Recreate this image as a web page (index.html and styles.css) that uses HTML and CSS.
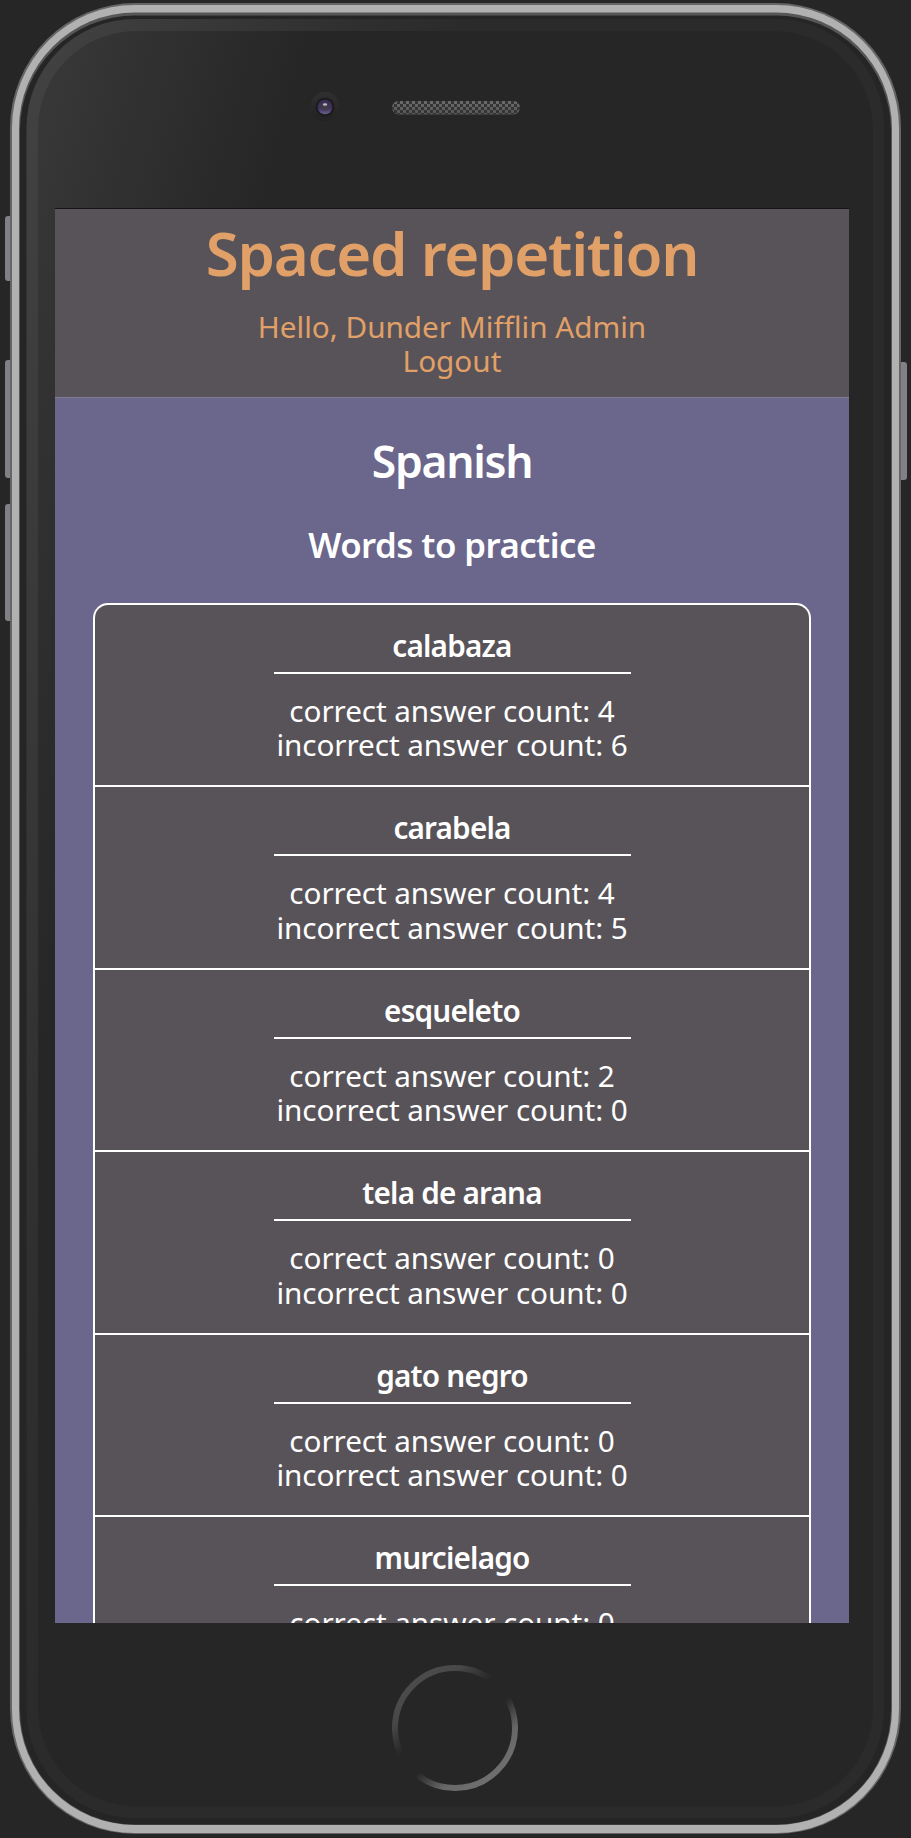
FILE: index.html
```html
<!DOCTYPE html>
<html lang="en">
<head>
<meta charset="utf-8">
<title>Spaced repetition</title>
<link rel="stylesheet" href="styles.css">
</head>
<body>
<div class="device">
  <svg class="hardware" viewBox="0 0 911 1838" aria-hidden="true">
    <defs>
      <linearGradient id="glare" gradientUnits="userSpaceOnUse" x1="30" y1="60" x2="284" y2="126">
        <stop offset="0" stop-color="#393939"/><stop offset="1" stop-color="#262626"/>
      </linearGradient>
      <linearGradient id="rim" gradientUnits="userSpaceOnUse" x1="30" y1="60" x2="430" y2="164">
        <stop offset="0" stop-color="#424242"/><stop offset="0.75" stop-color="#2f2f2f"/><stop offset="1" stop-color="#2b2b2b"/>
      </linearGradient>
      <linearGradient id="ring" x1="0.18" y1="0.12" x2="0.82" y2="0.88">
        <stop offset="0" stop-color="#4b4b4b"/><stop offset="0.14" stop-color="#484848"/><stop offset="0.38" stop-color="#262626"/>
        <stop offset="0.59" stop-color="#262626"/><stop offset="0.82" stop-color="#676767"/><stop offset="1" stop-color="#6e6e6e"/>
      </linearGradient>
      <linearGradient id="lensRim" x1="0" y1="0" x2="0" y2="1">
        <stop offset="0" stop-color="#303030"/><stop offset="1" stop-color="#222"/>
      </linearGradient>
      <linearGradient id="lens" x1="0" y1="0" x2="0" y2="1">
        <stop offset="0" stop-color="#372b52"/><stop offset="0.6" stop-color="#40345f"/><stop offset="1" stop-color="#6b6088"/>
      </linearGradient>
      <linearGradient id="grille" x1="0" y1="0" x2="0" y2="1">
        <stop offset="0" stop-color="#6c6c6c"/><stop offset="1" stop-color="#555"/>
      </linearGradient>
      <pattern id="mesh" width="6" height="6" x="391" y="101" patternUnits="userSpaceOnUse">
        <path d="M0 0h3v3H0zM3 3h3v3H3z" fill="#343434"/>
      </pattern>
    </defs>
    <g fill="#828085">
      <rect x="5" y="216" width="12" height="65" rx="3"/>
      <rect x="5" y="360" width="12" height="118" rx="3"/>
      <rect x="5" y="504" width="12" height="117" rx="3"/>
      <rect x="894" y="362" width="13" height="118" rx="3"/>
    </g>
    <rect x="10" y="3" width="891" height="1831" rx="125" fill="#656565"/>
    <rect x="12" y="5" width="887" height="1828" rx="123" fill="#b1b1b1"/>
    <rect x="19" y="12.5" width="873" height="1812.5" rx="116" fill="#565656"/>
    <rect x="20" y="15.5" width="871" height="1809" rx="115" fill="#252525"/>
    <rect x="26.5" y="19" width="857.5" height="1799" rx="109" fill="url(#rim)"/>
    <rect x="38" y="31" width="835" height="1775.5" rx="98" fill="url(#glare)"/>
    <circle cx="325" cy="106.500" r="14.500" fill="url(#lensRim)"/>
    <circle cx="325" cy="107" r="9.500" fill="#1c1b1e"/>
    <circle cx="325" cy="107" r="7.300" fill="url(#lens)"/>
    <circle cx="325" cy="106.500" r="4" fill="#3f3b49"/>
    <ellipse cx="325" cy="104.500" rx="2.200" ry="1.300" fill="#b9b6be"/>
    <rect x="392" y="101" width="128" height="13.500" rx="6.500" fill="url(#grille)"/>
    <rect x="392" y="101" width="128" height="13.500" rx="6.500" fill="url(#mesh)"/>
    <circle cx="455" cy="1728" r="60" fill="none" stroke="url(#ring)" stroke-width="6"/>
  </svg>
  <main class="screen">
    <header class="header">
      <h1 class="brand">Spaced repetition</h1>
      <div class="greeting">Hello, Dunder Mifflin Admin</div>
      <div class="logout">Logout</div>
    </header>
    <section class="dashboard">
      <h2 class="language">Spanish</h2>
      <h3 class="subtitle">Words to practice</h3>
      <ul class="words">
        <li class="word"><h4 class="term">calabaza</h4><p class="count">correct answer count: 4</p><p class="count">incorrect answer count: 6</p></li>
        <li class="word"><h4 class="term">carabela</h4><p class="count">correct answer count: 4</p><p class="count">incorrect answer count: 5</p></li>
        <li class="word"><h4 class="term">esqueleto</h4><p class="count">correct answer count: 2</p><p class="count">incorrect answer count: 0</p></li>
        <li class="word"><h4 class="term">tela de arana</h4><p class="count">correct answer count: 0</p><p class="count">incorrect answer count: 0</p></li>
        <li class="word"><h4 class="term">gato negro</h4><p class="count">correct answer count: 0</p><p class="count">incorrect answer count: 0</p></li>
        <li class="word"><h4 class="term">murcielago</h4><p class="count">correct answer count: 0</p><p class="count">incorrect answer count: 0</p></li>
      </ul>
    </section>
  </main>
</div>
</body>
</html>
```
FILE: styles.css
```css
* { box-sizing: border-box; }
body { margin: 0; background: #262626; font-family: "Noto Sans", "Open Sans", sans-serif; }
h1, h2, h3, h4, p, ul { margin: 0; padding: 0; }
.device { position: relative; width: 911px; height: 1838px; padding: 208px 62px 0 55px; overflow: hidden; }
.hardware { position: absolute; inset: 0; width: 911px; height: 1838px; }
.screen { position: relative; height: 1415px; border-top: 1px solid #151515; overflow: hidden; background: #6b668b; text-align: center; font-size: 29.7px; line-height: 34.4px; }
.header { height: 189px; padding-top: 9px; background: #585358; border-bottom: 1px solid #817b95; color: #e1a067; }
.brand { height: 70px; margin-bottom: 22px; font-size: 60px; line-height: 70px; font-weight: 600; letter-spacing: -1.3px; white-space: nowrap; }
.dashboard { padding: 38px 38px 0; color: #fff; }
.language { height: 50px; font-size: 44.5px; line-height: 50px; font-weight: 600; letter-spacing: -1.3px; }
.subtitle { height: 40px; margin: 39px 0 37.500px; font-size: 34.8px; line-height: 40px; font-weight: 600; letter-spacing: -0.55px; }
.words { list-style: none; border: 2px solid #fff; border-radius: 15px; background: #585358; overflow: hidden; }
.word { height: 182.5px; padding-top: 24px; border-bottom: 2px solid #fff; }
.term { width: 357px; margin: 0 auto 20px; padding-bottom: 9px; border-bottom: 2px solid #fff; font-size: 29.7px; font-weight: 600; letter-spacing: -0.8px; }
.count { white-space: nowrap; letter-spacing: -0.08px; }
```
